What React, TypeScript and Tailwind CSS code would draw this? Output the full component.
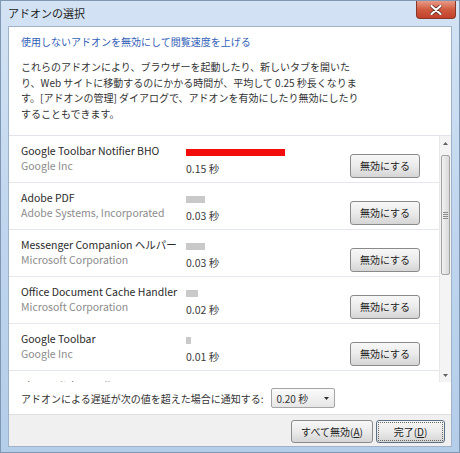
import React from 'react';

type Addon = {
  name: string;
  publisher: string;
  time: string;
  bar: number;
  slow?: boolean;
  partial?: boolean;
};

const addons: Addon[] = [
  { name: 'Google Toolbar Notifier BHO', publisher: 'Google Inc', time: '0.15 秒', bar: 99, slow: true },
  { name: 'Adobe PDF', publisher: 'Adobe Systems, Incorporated', time: '0.03 秒', bar: 19 },
  { name: 'Messenger Companion ヘルパー', publisher: 'Microsoft Corporation', time: '0.03 秒', bar: 19 },
  { name: 'Office Document Cache Handler', publisher: 'Microsoft Corporation', time: '0.02 秒', bar: 12 },
  { name: 'Google Toolbar', publisher: 'Google Inc', time: '0.01 秒', bar: 5 },
  { name: 'Skype Click to Call', publisher: '', time: '', bar: 0, partial: true },
];

function Win7Button({ children, width, isDefault }: { children: React.ReactNode; width: string; isDefault?: boolean }) {
  return (
    <button
      className={`${width} h-[23px] rounded-[3px] border ${isDefault ? 'border-[#5b6f84]' : 'border-[#8a8a8a]'} bg-gradient-to-b from-[#f7f7f7] via-[#ebebeb] to-[#d5d5d5] text-[10px] text-[#222] flex items-center justify-center p-[2px]`}
    >
      <span className={`w-full h-full flex items-center justify-center ${isDefault ? 'outline-1 outline-dotted outline-[#6a6a6a]' : ''}`}>
        {children}
      </span>
    </button>
  );
}

function AddonRow({ addon }: { addon: Addon }) {
  // last row is cut by the list edge, only the top of its name shows
  if (addon.partial) {
    return (
      <div className="h-[47px] shrink-0 pl-[12px] pt-[7px] leading-[15px] text-[10.5px] text-[#2b2b2b] whitespace-nowrap">
        {addon.name}
      </div>
    );
  }
  return (
    <div className="h-[47px] shrink-0 flex border-b border-[#e4e8ee] pl-[12px]">
      <div className="w-[165px] pt-[7px] leading-[15px] text-[10.5px]">
        <div className="text-[#2b2b2b] whitespace-nowrap">{addon.name}</div>
        <div className="text-[#8c8c8c] whitespace-nowrap">{addon.publisher}</div>
      </div>
      <div className="flex-1 pt-[13px]">
        <div
          className={`h-[7px] ${addon.slow ? 'bg-[#f20c0c]' : 'bg-[#c9c9c9]'}`}
          style={{ width: addon.bar }}
        />
        <div className="mt-[5px] leading-[15px] text-[10.5px] text-[#3a3a3a]">{addon.time}</div>
      </div>
      <div className="pt-[15px] pr-[19px]">
        <button className="w-[70px] h-[24px] rounded-[3px] border border-[#8a8a8a] bg-gradient-to-b from-[#f7f7f7] via-[#ebebeb] to-[#d5d5d5] text-[10px] text-[#222]">
          無効にする
        </button>
      </div>
    </div>
  );
}

function ScrollBar() {
  return (
    <div className="w-[12px] bg-[#f4f4f4] border-l border-[#e8e8e8] flex flex-col">
      <div className="h-[14px] flex items-center justify-center">
        <svg width="5" height="3" viewBox="0 0 5 3"><path d="M0 3 L2.5 0 L5 3 Z" fill="#606060" /></svg>
      </div>
      <div className="h-[5px]" />
      <div className="h-[120px] mx-[1px] rounded-[2px] border border-[#a3a3a3] bg-gradient-to-r from-[#f2f2f2] to-[#d9d9d9] flex flex-col items-center justify-center gap-[1px]">
        <div className="w-[5px] h-px bg-[#8c8c8c]" />
        <div className="w-[5px] h-px bg-[#8c8c8c]" />
        <div className="w-[5px] h-px bg-[#8c8c8c]" />
        <div className="w-[5px] h-px bg-[#8c8c8c]" />
      </div>
      <div className="flex-1" />
      <div className="h-[14px] flex items-center justify-center">
        <svg width="5" height="3" viewBox="0 0 5 3"><path d="M0 0 L2.5 3 L5 0 Z" fill="#606060" /></svg>
      </div>
    </div>
  );
}

export default function App() {
  return (
    <div className="w-[460px] h-[453px] flex flex-col bg-gradient-to-b from-[#d3e3f4] via-[#c0d6ee] to-[#b4cde8] border border-[#7f97b3] font-['Noto_Sans_CJK_JP','Noto_Sans',sans-serif] overflow-hidden">
      <div className="h-[25px] shrink-0 flex items-start justify-between">
        <div className="pl-[7px] pt-[4px] text-[11px] leading-[16px] text-[#1c1c1c]">アドオンの選択</div>
        <div className="mr-[3px] w-[40px] h-[18px] rounded-b-[4px] border border-t-0 border-[#8a3526] bg-gradient-to-b from-[#e89a86] via-[#d05a40] to-[#c2412a] flex items-center justify-center">
          <svg width="12" height="10" viewBox="0 0 12 10">
            <path d="M1.5 1 L10.5 9 M10.5 1 L1.5 9" stroke="#5a2a20" strokeWidth="3.6" strokeLinecap="round" />
            <path d="M1.5 1 L10.5 9 M10.5 1 L1.5 9" stroke="#ffffff" strokeWidth="2.2" strokeLinecap="round" />
          </svg>
        </div>
      </div>

      <div className="mx-[7px] flex-1 flex flex-col bg-white border border-[#9fb2c9]">
        <div className="pl-[12px] pt-[7px] text-[10px] leading-[15px] text-[#3260b8]">
          使用しないアドオンを無効にして閲覧速度を上げる
        </div>
        <div className="pl-[12px] mt-[10px] text-[10px] leading-[15.5px] text-[#333]">
          <div>これらのアドオンにより、ブラウザーを起動したり、新しいタブを開いた</div>
          <div>り、Web サイトに移動するのにかかる時間が、平均して 0.25 秒長くなりま</div>
          <div>す。[アドオンの管理] ダイアログで、アドオンを有効にしたり無効にしたり</div>
          <div>することもできます。</div>
        </div>

        <div className="mt-[14px] h-[247px] shrink-0 flex border-t border-[#e1e5eb]">
          <div className="flex-1 flex flex-col overflow-hidden">
            {addons.map(a => (
              <AddonRow key={a.name} addon={a} />
            ))}
          </div>
          <ScrollBar />
        </div>

        <div className="flex-1 flex items-center pl-[12px] gap-[8px]">
          <span className="text-[10px] text-[#333]">アドオンによる遅延が次の値を超えた場合に通知する:</span>
          <div className="w-[64px] h-[20px] rounded-[2px] border border-[#a5a5a5] bg-gradient-to-b from-[#fbfbfb] to-[#e6e6e6] flex items-center justify-between pl-[4px] pr-[5px]">
            <span className="text-[10px] text-[#333]">0.20 秒</span>
            <svg width="5" height="3" viewBox="0 0 5 3"><path d="M0 0 L2.5 3 L5 0 Z" fill="#303030" /></svg>
          </div>
        </div>

        <div className="h-[32px] shrink-0 bg-[#f0f0f0] border-t border-[#dfdfdf] flex justify-end items-start pt-[5px] pr-[6px] gap-[3px]">
          <Win7Button width="w-[82px]">
            すべて無効(<span className="underline">A</span>)
          </Win7Button>
          <Win7Button width="w-[69px]" isDefault>
            完了(<span className="underline">D</span>)
          </Win7Button>
        </div>
      </div>
      <div className="h-[5px] shrink-0" />
    </div>
  );
}
